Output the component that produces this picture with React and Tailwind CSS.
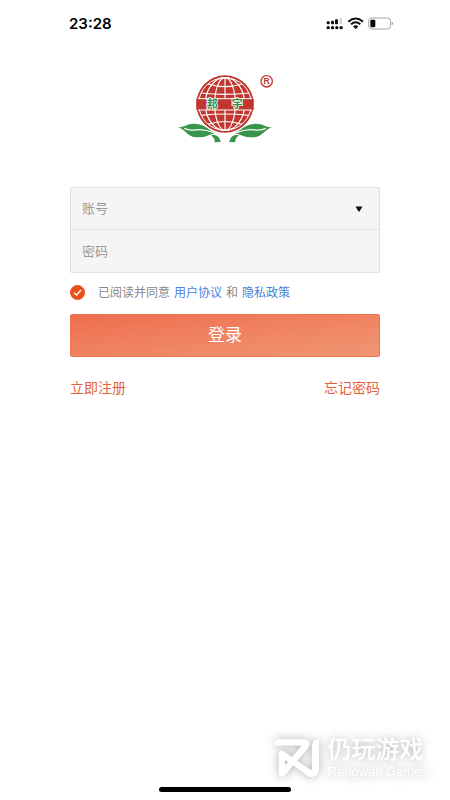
function StatusIcons() {
  return (
    <svg width="68" height="14" viewBox="0 0 204 42" aria-hidden="true">
      <g fill="#111">
        <rect x="2" y="13" width="9" height="9" rx="3" />
        <rect x="15" y="11" width="9" height="11" rx="3" />
        <rect x="27" y="7" width="9" height="15" rx="3" />
        <circle cx="6.500" cy="32" r="5" />
        <circle cx="19.500" cy="32" r="5" />
        <circle cx="32.500" cy="32" r="5" />
        <circle cx="45.500" cy="32" r="5" />
      </g>
      <rect x="41" y="3" width="7" height="19" rx="3" fill="#d4d4d4" />
      <g fill="none" stroke="#111" strokeWidth="6">
        <path d="M67 14 Q89 -5 111 14" />
        <path d="M75 22 Q89 10 103 22" />
      </g>
      <path d="M81 28 Q89 21 97 28 L89 37 Z" fill="#111" />
      <rect x="128" y="3" width="66" height="33" rx="10" fill="none" stroke="#a3a3a3" strokeWidth="3" />
      <path d="M197 14 Q206 19 197 25 Z" fill="#a3a3a3" />
      <rect x="133" y="8" width="15" height="23" rx="4" fill="#080808" />
    </svg>
  );
}

function BrandLogo() {
  return (
    <svg width="98" height="70" viewBox="36 27 294 210" role="img" aria-label="邦宇">
      <circle cx="180" cy="117" r="86" fill="#c1372f" />
      <circle cx="180" cy="117" r="79" fill="none" stroke="#fff" strokeWidth="3" />
      <g fill="none" stroke="#fff" strokeWidth="3.500">
        <path d="M180 38 V196" />
        <ellipse cx="180" cy="117" rx="31" ry="79" />
        <ellipse cx="180" cy="117" rx="59" ry="79" />
        <path d="M129 57 Q180 73 231 57" />
        <path d="M108 84 Q180 92 252 84" />
        <path d="M108 151 Q180 143 252 151" />
        <path d="M129 178 Q180 161 231 178" />
      </g>
      <path d="M94 101 H266 V135 H94 Z" fill="#c1372f" />
      <path d="M99 101 H261 M99 135 H261" stroke="#fff" strokeWidth="3" />
      <g
        fill="#2f8a49"
        stroke="#fff"
        strokeWidth="5"
        paintOrder="stroke"
        fontSize="33"
        fontWeight="700"
        textAnchor="middle"
        className="font-['Noto_Sans_CJK_SC',sans-serif]"
      >
        <text x="142" y="130">邦</text>
        <text x="217" y="130">宇</text>
      </g>
      <g fill="#38954a">
        <path d="M38 186 C60 190 64 174 94 177 C121 178 132 198 151 204 C133 209 120 218 96 217 C66 216 63 194 38 186 Z" />
        <path d="M138 211 C153 207 164 215 167 231 L149 232 C150 224 147 218 138 211 Z" />
        <path d="M322 186 C300 190 296 174 266 177 C239 178 228 198 209 204 C227 209 240 218 264 217 C294 216 297 194 322 186 Z" />
        <path d="M222 211 C207 207 196 215 193 231 L211 232 C210 224 213 218 222 211 Z" />
      </g>
      <g fill="none" stroke="#fff" strokeWidth="4">
        <path d="M58 190 C88 206 96 180 148 204" />
        <path d="M302 190 C272 206 264 180 212 204" />
      </g>
      <circle cx="305" cy="49" r="17" fill="none" stroke="#c1372f" strokeWidth="4" />
      <text x="305" y="58" fill="#c1372f" fontSize="26" fontWeight="700" textAnchor="middle" className="font-['Liberation_Sans',sans-serif]">
        R
      </text>
    </svg>
  );
}

function Watermark() {
  return (
    <div className="pointer-events-none absolute right-[22px] bottom-[18px] flex items-end gap-2 text-white drop-shadow-[0_0_5px_rgba(0,0,0,0.32)]">
      <svg width="46" height="40" viewBox="0 0 138 120" className="mb-1" aria-hidden="true">
        <g fill="none" stroke="#fff" strokeWidth="19" strokeLinejoin="round">
          <path d="M8 13 H90 Q102 14 94 25 L25 106" />
          <path d="M24 106 V48 L108 106" strokeLinecap="round" />
        </g>
        <path d="M0 22 Q2 3 20 3 V22 Z" fill="#fff" />
        <path d="M114 24 Q116 4 135 3 V96 Q133 117 112 117 Q104 117 96 110 L92 88 L114 96 Z" fill="#fff" />
      </svg>
      <div className="flex flex-col">
        <span className="font-['Noto_Sans_CJK_SC',sans-serif] text-2xl leading-7 font-medium">仍玩游戏</span>
        <span className="font-['Liberation_Sans',sans-serif] text-[13px] leading-5">Rengwan Games</span>
      </div>
    </div>
  );
}

export default function App() {
  return (
    <div className="relative flex min-h-screen flex-col bg-white font-['Liberation_Sans','Noto_Sans_CJK_SC',sans-serif]">
      <header className="flex h-12 items-center justify-between pr-14 pl-[69px]">
        <span className="font-['Inter',sans-serif] text-[15px] leading-5 font-semibold text-black">23:28</span>
        <StatusIcons />
      </header>

      <main className="flex flex-1 flex-col px-[70px] pt-[26px]">
        <div className="flex justify-center pl-0.5">
          <BrandLogo />
        </div>

        <form className="mt-[43px] flex flex-col" onSubmit={(e) => e.preventDefault()}>
          <div className="divide-y divide-[#e4e4e4] rounded-xs border border-[#e0e0e0] bg-[#f5f5f5]">
            <div className="flex h-[42px] items-center pr-4">
              <input
                type="text"
                aria-label="账号"
                placeholder="账号"
                className="h-full min-w-0 flex-1 bg-transparent px-[11px] text-[13px] text-gray-800 outline-none placeholder:text-[#999]"
              />
              <button type="button" aria-label="选择账号" className="flex">
                <svg width="8" height="6" viewBox="0 0 8 6" aria-hidden="true">
                  <path d="M0.500 0.500 H7.500 L4.500 5.500 H3.500 Z" fill="#111" />
                </svg>
              </button>
            </div>
            <div className="flex h-[42px] items-center">
              <input
                type="password"
                aria-label="密码"
                placeholder="密码"
                className="h-full min-w-0 flex-1 bg-transparent px-[11px] text-[13px] text-gray-800 outline-none placeholder:text-[#999]"
              />
            </div>
          </div>

          <div className="mt-2 flex items-center text-xs leading-5 text-[#888]">
            <div className="mr-[13px] grid shrink-0">
              <input
                id="agree"
                type="checkbox"
                defaultChecked
                className="peer col-start-1 row-start-1 size-[15px] appearance-none rounded-full border border-[#bbb] checked:border-[#e94e1b] checked:bg-[#e94e1b]"
              />
              <svg
                viewBox="0 0 15 15"
                aria-hidden="true"
                className="pointer-events-none invisible col-start-1 row-start-1 size-[15px] peer-checked:visible"
              >
                <path d="M4 7.800 L6.500 10 L11 5" fill="none" stroke="#fff" strokeWidth="1.400" />
              </svg>
            </div>
            <div className="flex flex-wrap gap-x-1 pt-0.5">
              <label htmlFor="agree">已阅读并同意</label>
              <a href="#terms" className="text-[#4a7fe0]">用户协议</a>
              <span>和</span>
              <a href="#privacy" className="text-[#4a7fe0]">隐私政策</a>
            </div>
          </div>

          <button
            type="submit"
            className="mt-[11px] h-[43px] rounded-xs border border-[#ee7350] bg-linear-to-br from-[#ee6e4e] to-[#f09673] text-[17px] text-white"
          >
            登录
          </button>
        </form>

        <nav className="mt-[19px] flex justify-between text-sm leading-6 text-[#e5623f]">
          <a href="#register">立即注册</a>
          <a href="#forgot">忘记密码</a>
        </nav>
      </main>

      <div className="mb-2 flex justify-center">
        <div className="h-[5px] w-[132px] rounded-full bg-black" />
      </div>
      <Watermark />
    </div>
  );
}
